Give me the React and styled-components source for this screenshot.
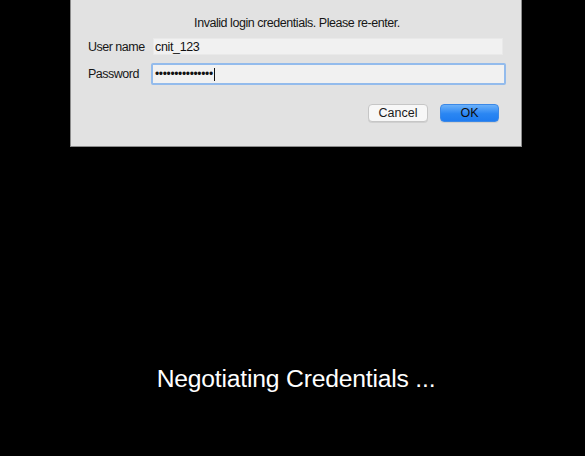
import React, { useState } from 'react';
import styled, { createGlobalStyle } from 'styled-components';

const GlobalStyle = createGlobalStyle`
  html, body {
    margin: 0;
    padding: 0;
    background: #000;
  }
  body {
    font-family: 'Liberation Sans', Arial, sans-serif;
    width: 585px;
    height: 456px;
    overflow: hidden;
  }
`;

const Screen = styled.div`
  width: 452px;
  margin-left: 70px;
  display: flex;
  flex-direction: column;
`;

const Dialog = styled.div`
  height: 147px;
  background: #e2e2e2;
  border: 1px solid #8c8c8c;
  border-top: none;
  box-sizing: border-box;
  padding: 16px 15px 0 17px;
  display: flex;
  flex-direction: column;
`;

const Message = styled.div`
  text-align: center;
  font-size: 12.5px;
  letter-spacing: -0.45px;
  color: #161616;
  margin-bottom: 8px;
`;

const Row = styled.div`
  display: flex;
  align-items: center;
  margin-bottom: ${(p) => p.gap || 0}px;
`;

const Label = styled.label`
  width: 64px;
  font-size: 12.5px;
  letter-spacing: -0.5px;
  color: #161616;
`;

const Field = styled.input`
  box-sizing: border-box;
  height: 17px;
  width: 350px;
  margin-left: 1px;
  padding: 0 1px;
  background: #f1f1f1;
  border: 1px solid #e9e9e9;
  font-family: 'Liberation Sans', Arial, sans-serif;
  font-size: 12.5px;
  letter-spacing: -0.35px;
  color: #111;
  outline: none;
`;

const Caret = styled.span`
  display: inline-block;
  width: 1px;
  height: 13px;
  margin-left: 1px;
  background: #111;
`;

const PasswordBox = styled.div`
  box-sizing: border-box;
  height: 22px;
  width: 355px;
  margin-left: -1px;
  padding: 0 2px;
  background: #f1f1f1;
  border: 2px solid #93bbec;
  border-radius: 2px;
  display: flex;
  align-items: center;
  font-size: 12px;
  color: #111;
  letter-spacing: -0.35px;
`;

const Buttons = styled.div`
  display: flex;
  justify-content: flex-end;
  gap: 12px;
  margin-top: 19px;
  padding-right: 7px;
`;

const Button = styled.button`
  box-sizing: border-box;
  width: ${(p) => p.w}px;
  height: 18px;
  padding: 0;
  font-family: 'Liberation Sans', Arial, sans-serif;
  font-size: 12.5px;
  border-radius: 4px;
  cursor: pointer;
  color: ${(p) => (p.primary ? '#0d0d0d' : '#1a1a1a')};
  background: ${(p) =>
    p.primary
      ? 'linear-gradient(#6bb1fa, #2a86f3 55%, #1f7cf0)'
      : '#f7f7f7'};
  border: 1px solid ${(p) => (p.primary ? '#3b88e6' : '#c6c6c6')};
  box-shadow: 0 1px 0 rgba(0, 0, 0, 0.08);
`;

const Status = styled.div`
  margin-top: 218px;
  text-align: center;
  color: #fff;
  font-size: 24.7px;
  letter-spacing: -0.2px;
`;

export default function App() {
  const [user, setUser] = useState('cnit_123');

  return (
    <>
      <GlobalStyle />
      <Screen>
        <Dialog>
          <Message>Invalid login credentials. Please re-enter.</Message>
          <Row gap={8}>
            <Label>User name</Label>
            <Field value={user} onChange={(e) => setUser(e.target.value)} />
          </Row>
          <Row>
            <Label>Password</Label>
            <PasswordBox>
              {'•'.repeat(15)}
              <Caret />
            </PasswordBox>
          </Row>
          <Buttons>
            <Button w={60}>Cancel</Button>
            <Button w={59} primary>OK</Button>
          </Buttons>
        </Dialog>
        <Status>Negotiating Credentials ...</Status>
      </Screen>
    </>
  );
}
